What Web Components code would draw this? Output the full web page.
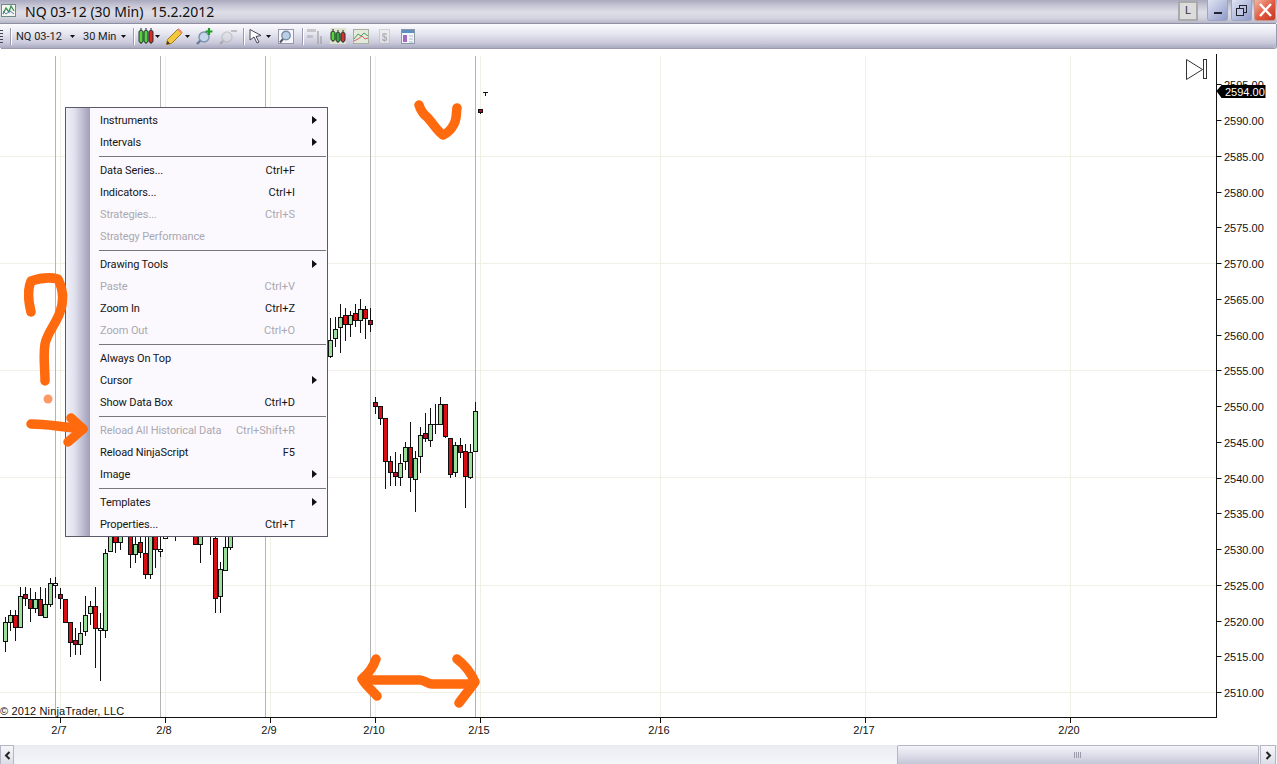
<!DOCTYPE html>
<html>
<head>
<meta charset="utf-8">
<title>NQ 03-12 (30 Min)</title>
<style>
    html, body { margin:0; padding:0; height:100%; overflow:hidden; background:#fff; }
</style>
</head>
<body>
<nt-window>
    <nt-titlebar slot="title" text="NQ 03-12 (30 Min)  15.2.2012"></nt-titlebar>
    <nt-toolbar slot="tools"></nt-toolbar>
    <nt-chart slot="chart">
        <nt-menu>
            <nt-item arrow>Instruments</nt-item>
            <nt-item arrow>Intervals</nt-item>
            <nt-sep></nt-sep>
            <nt-item keys="Ctrl+F">Data Series...</nt-item>
            <nt-item keys="Ctrl+I">Indicators...</nt-item>
            <nt-item keys="Ctrl+S" off>Strategies...</nt-item>
            <nt-item off>Strategy Performance</nt-item>
            <nt-sep></nt-sep>
            <nt-item arrow>Drawing Tools</nt-item>
            <nt-item keys="Ctrl+V" off>Paste</nt-item>
            <nt-item keys="Ctrl+Z">Zoom In</nt-item>
            <nt-item keys="Ctrl+O" off>Zoom Out</nt-item>
            <nt-sep></nt-sep>
            <nt-item>Always On Top</nt-item>
            <nt-item arrow>Cursor</nt-item>
            <nt-item keys="Ctrl+D">Show Data Box</nt-item>
            <nt-sep></nt-sep>
            <nt-item keys="Ctrl+Shift+R" off>Reload All Historical Data</nt-item>
            <nt-item keys="F5">Reload NinjaScript</nt-item>
            <nt-item arrow>Image</nt-item>
            <nt-sep></nt-sep>
            <nt-item arrow>Templates</nt-item>
            <nt-item keys="Ctrl+T">Properties...</nt-item>
        </nt-menu>
    </nt-chart>
    <nt-scrollbar slot="scroll"></nt-scrollbar>
</nt-window>
<script>
const TITLE_FONT = `"Noto Sans","Liberation Sans",sans-serif`;
const UI_FONT = `Roboto,"Liberation Sans",sans-serif`;
const AXIS_FONT = `"Liberation Sans",sans-serif`;

customElements.define("nt-window",class NtWindow extends HTMLElement {
    constructor(){
        super();
        this.attachShadow({mode:'open'}).innerHTML = `<style>
            :host { display:flex; flex-direction:column; width:1277px; height:764px; overflow:hidden; background:#fff; }
            ::slotted([slot=chart]) { flex:1 1 auto; min-height:0; }
        </style>
        <slot name="title"></slot>
        <slot name="tools"></slot>
        <slot name="chart"></slot>
        <slot name="scroll"></slot>`;
    }
});

customElements.define("nt-titlebar",class NtTitlebar extends HTMLElement {
    constructor(){
        super();
        this.attachShadow({mode:'open'}).innerHTML = `<style>
            :host { display:flex; align-items:flex-start; height:23px; box-sizing:border-box;
                background:linear-gradient(#a9a9be 0,#c3c3d3 5px,#dedee8 12px,#d4d4e0 18px,#b6b6c8 23px); }
            .logo { margin:3px 0 0 1px; width:15px; height:15px; flex:none; }
            .txt { margin-left:9px; font:14px/23px ${TITLE_FONT}; color:#111; white-space:pre; flex:1; }
            .lock { width:20px; height:20px; box-sizing:border-box; border:2px solid #aaa; background:#dcdcdc;
                font:11px/16px ${UI_FONT}; color:#333; text-align:center; margin:1px 9px 0 0; }
            .btn { width:21px; height:21px; box-sizing:border-box; margin-right:3px; border:1px solid #9ea5c4; border-top:0; border-radius:0 0 3px 3px;
                background:linear-gradient(135deg,#dfe3f2,#b4bcdc 55%,#8e9ac8); display:flex; align-items:center; justify-content:center; }
            .btn.close { width:22px; background:linear-gradient(135deg,#f3b6a2,#e0563c 55%,#c63a25); border-color:#c9968c; margin:0 1px 0 -1px; }
            svg { display:block; }
        </style>
        <svg class="logo" viewBox="0 0 15 15">
            <rect x=".5" y="1.5" width="14" height="12" fill="#f2f6ee" stroke="#6c8a88"/>
            <path d="M2 11L5 5l3 4 2-6 3 5" fill="none" stroke="#3d8f55" stroke-width="1.3"/>
            <path d="M2 8l3 3 4-3 4 3" fill="none" stroke="#5a7fc0" stroke-width="1"/>
        </svg>
        <div class="txt"></div>
        <div class="lock">L</div>
        <div class="btn"><svg width="10" height="10"><rect x="1" y="7" width="8" height="2" fill="#223"/></svg></div>
        <div class="btn"><svg width="13" height="13" fill="none" stroke="#223"><rect x="4.5" y="1.5" width="7" height="7"/><rect x="1.5" y="4.5" width="7" height="7" fill="#c0c8e4"/></svg></div>
        <div class="btn close"><svg width="15" height="14" stroke="#fff" stroke-width="2.4"><path d="M2 1l11 12M13 1L2 13"/></svg></div>`;
        this.shadowRoot.querySelector(".txt").textContent = this.getAttribute("text");
    }
});

customElements.define("nt-toolbar",class NtToolbar extends HTMLElement {
    constructor(){
        super();
        let candle = (x,y,h,c)=>`<path d="M${x} ${y-2}v${h+4}" stroke="#222"/><rect x="${x-2}" y="${y+.5}" width="4" height="${h}" rx="1.5" fill="${c}" stroke="#233"/>`;
        let caret = (ml)=>`<svg style="margin-left:${ml}px" width="5" height="3"><path d="M0 0h5L2.5 3z" fill="#111"/></svg>`;
        this.attachShadow({mode:'open'}).innerHTML = `<style>
            :host { display:block; height:27px; background:#fff; }
            .bar { height:25px; display:flex; align-items:center; box-sizing:border-box; border-top:1px solid #8f8fa3;
                background:linear-gradient(#fbfbfe,#e6e6f0 40%,#c8c8da 80%,#a9a9c0); border-radius:0 0 3px 0; margin-right:1px; box-shadow:1px 1px 0 #9a9aae; font:11px ${UI_FONT}; color:#222; }
            .grip { width:3px; height:13px; flex:none; background:repeating-linear-gradient(#445 0 1px,transparent 1px 3px); }
            .div { width:1px; height:17px; background:#9a9aae; box-shadow:1px 0 0 #fff; flex:none; }
            span { white-space:nowrap; flex:none; display:block; }
            svg { display:block; flex:none; }
        </style>
        <div class="bar">
            <div class="grip"></div>
            <div class="div" style="margin-left:7px"></div>
            <span style="margin-left:5px;width:47px">NQ 03-12</span>${caret(7)}
            <span style="margin-left:8px;width:31px">30 Min</span>${caret(7)}
            <div class="div" style="margin-left:7px"></div>
            <svg style="margin-left:4px" width="16" height="18" viewBox="0 0 16 18">${candle(3,3,12,"#58d040")}${candle(8,3,12,"#58d040")}${candle(13,3,12,"#dc2a20")}</svg>${caret(1)}
            <svg style="margin-left:6px" width="17" height="17" viewBox="0 0 17 17"><path d="M.5 16.500l1-5L12 1l4 4L5.500 15.500z" fill="#f4c83c" stroke="#a07a18"/><path d="M12 1l4 4" stroke="#e88a70" stroke-width="2"/><path d="M.5 16.500l1-3.500 2.500 2.500z" fill="#333"/></svg>${caret(2)}
            <svg style="margin-left:6px" width="18" height="17" viewBox="0 0 18 17"><path d="M1 16l5-5" stroke="#6a7a98" stroke-width="2.400"/><circle cx="8" cy="9" r="5" fill="#c6d6ea" stroke="#7f93b0" stroke-width="1.500"/><path d="M13 0v7M9.500 3.500h7" stroke="#1f9a2a" stroke-width="2.200"/></svg>
            <svg style="margin-left:5px;opacity:.45" width="18" height="17" viewBox="0 0 18 17"><path d="M1 16l5-5" stroke="#888" stroke-width="2.400"/><circle cx="8" cy="9" r="5" fill="#ddd" stroke="#aaa" stroke-width="1.500"/><path d="M12 3h6" stroke="#888" stroke-width="2"/></svg>
            <div class="div" style="margin-left:6px"></div>
            <svg style="margin-left:5px" width="14" height="16" viewBox="0 0 14 16"><path d="M1 1.500l11 6-5 1 3 5.500-2 1-3-6-4 3z" fill="#fff" stroke="#445"/></svg>${caret(3)}
            <svg style="margin-left:7px" width="16" height="15" viewBox="0 0 16 15"><rect x=".5" y=".5" width="15" height="14" fill="#f4f6fb" stroke="#99a"/><circle cx="8" cy="6.500" r="4.200" fill="#b9cfe6" stroke="#7a8ea8" stroke-width="1.400"/><path d="M5 10l-3 3.500" stroke="#556" stroke-width="2"/></svg>
            <div class="div" style="margin-left:8px"></div>
            <svg style="margin-left:3px;opacity:.55" width="17" height="16" viewBox="0 0 17 16"><path d="M1 1h9v3H1zM1 7h6v3H1z" fill="#aaa"/><path d="M12 3v13M15 8v8" stroke="#999" stroke-width="2"/></svg>
            <svg style="margin-left:7px" width="16" height="16" viewBox="0 0 16 16"><rect width="16" height="16" fill="#dfe4cf"/>${candle(3,3,9,"#58d040")}${candle(8,4,9,"#3aa83a")}${candle(13,4,9,"#d83030")}</svg>
            <svg style="margin-left:7px" width="16" height="15" viewBox="0 0 16 15"><rect x=".5" y=".5" width="15" height="14" fill="#e4eadb" stroke="#a5b0a0"/><path d="M1 10l4-5 3 2 3-3 4 3" fill="none" stroke="#4aa05a"/><path d="M1 12l4-2 4-3 3 3 3-1" fill="none" stroke="#d06060"/></svg>
            <svg style="margin-left:10px;opacity:.55" width="11" height="15" viewBox="0 0 11 15"><rect x=".5" y=".5" width="10" height="14" fill="#eee" stroke="#bbb"/><text x="5.500" y="11.500" text-anchor="middle" font-family="Liberation Sans" font-weight="700" font-size="10" fill="#888">$</text></svg>
            <svg style="margin-left:11px" width="14" height="15" viewBox="0 0 14 15"><rect x=".5" y=".5" width="13" height="14" fill="#f3f6fa" stroke="#8c98a8"/><rect x="1" y="1" width="12" height="3" fill="#5b90c0"/><rect x="2" y="6" width="4" height="7" fill="#a06ac0"/><path d="M8 7h4M8 10h4M8 13h4" stroke="#b0b8c8"/></svg>
        </div>`;
    }
});

customElements.define("nt-chart",class NtChart extends HTMLElement {
    constructor(){
        super();
        this.attachShadow({mode:'open'}).innerHTML = `<style>
            :host { display:block; position:relative; background:#fff; }
            svg { position:absolute; left:0; top:0; display:block; }
            text { font-family:${AXIS_FONT}; font-size:11px; fill:#111; }
            .notes { pointer-events:none; filter:blur(.4px); }
            ::slotted(nt-menu) { position:absolute; left:65px; top:57px; }
        </style>
        ${this.draw()}
        <slot></slot>
        ${this.notes()}`;
    }

    // chart coords are page coords minus the 50px of bars above
    draw(){
        const T = 50;
        let s = `<svg width="1277" height="695" viewBox="0 ${T} 1277 695">`;
        // grid
        [156,263,370,477,585,692].forEach(y=>{
            s += `<path d="M0 ${y+.5}H1216" stroke="#f1f0e4"/>`;
        });
        for(let p=2510;p<=2595;p+=5){
            let y = Math.round(121 + (2590-p)*7.15);
            s += `<path d="M1216.5 ${y-.5}h5" stroke="#111"/>`;
            s += `<text x="1224" y="${y+4}">${p}.00</text>`;
        }
        [[60,"2/7"],[165,"2/8"],[270,"2/9"],[375,"2/10"],[480,"2/15"],[660,"2/16"],[865,"2/17"],[1070,"2/20"]].forEach(([x,t])=>{
            s += `<path d="M${x+.5} ${T+6}V717" stroke="#f1f0e4"/>`;
            s += `<path d="M${x+.5} 717v6" stroke="#111"/>`;
            s += `<text x="${x-1}" y="734" text-anchor="middle">${t}</text>`;
        });
        [55,160,265,370,475].forEach(x=>{
            s += `<path d="M${x+.5} ${T+6}V717" stroke="#b4b4b4"/>`;
        });
        // candles: x, body top, body bottom, wick top, wick bottom, g/r
        const bars = [
            [5,622,641,617,652,"g"],[10,615,622,610,631,"g"],[15,615,627,610,641,"r"],[20,596,627,587,627,"g"],
            [25,594,598,587,606,"d"],[30,599,608,588,622,"r"],[35,599,608,592,613,"g"],[40,599,615,587,615,"r"],
            [45,604,617,588,617,"g"],[50,583,604,578,607,"g"],[55,583,585,577,598,"w"],[60,594,598,588,609,"d"],
            [65,599,622,599,623,"r"],[70,622,642,622,657,"r"],[75,640,644,628,655,"d"],[80,633,644,622,655,"g"],
            [85,615,631,596,636,"g"],[90,606,613,601,625,"g"],[95,606,628,587,668,"r"],[100,628,630,613,681,"w"],
            [105,553,630,549,638,"g"],[110,530,551,530,552,"g"],[115,530,542,530,553,"r"],[120,530,542,530,550,"g"],
            [130,530,554,530,568,"r"],[135,544,554,530,563,"g"],[140,542,552,530,558,"r"],[145,553,574,530,579,"r"],
            [150,530,574,530,579,"g"],[155,530,549,530,568,"r"],[160,549,551,530,557,"w"],[165,535,538,530,539,"w"],
            [175,530,534,530,541,"g"],[195,530,544,530,544,"r"],[200,530,544,530,563,"g"],[210,530,532,530,555,"w"],
            [215,538,598,530,613,"r"],[220,569,596,562,613,"g"],[225,547,570,530,571,"g"],[230,530,547,530,550,"g"],
            [330,340,356,318,358,"g"],[335,329,338,317,347,"g"],[340,317,327,304,353,"g"],[345,315,324,308,341,"r"],
            [350,315,324,311,337,"g"],[355,313,320,304,327,"r"],[360,309,320,299,333,"g"],[365,309,318,306,339,"r"],
            [370,320,324,308,332,"d"],[375,402,406,397,414,"d"],[380,406,418,406,425,"r"],[385,418,461,418,489,"r"],
            [390,461,472,456,486,"r"],[395,472,476,452,486,"d"],[400,463,477,454,486,"g"],[405,447,461,442,470,"g"],
            [410,447,477,422,492,"r"],[415,458,479,451,512,"g"],[420,435,456,427,473,"g"],[425,433,438,413,442,"d"],
            [430,424,440,408,447,"g"],[435,424,424,404,434,"w"],[440,404,424,397,424,"g"],[445,404,436,404,438,"r"],
            [450,438,474,438,478,"r"],[455,445,472,442,477,"g"],[460,445,452,438,458,"r"],[465,451,476,444,508,"r"],
            [470,452,477,444,479,"g"],[475,411,451,402,451,"g"],[480,109,112,109,114,"d"],[485,92,92,92,96,"w"]
        ];
        const fill = {g:"#9bdd9b",r:"#d80f14",d:"#a8122a",w:"#fff"};
        bars.forEach(([x,a,b,c,d,k])=>{
            s += `<path d="M${x+.5} ${c}V${d}" stroke="#111"/>`;
            if(a==b) s += `<path d="M${x-2} ${a+.5}h5" stroke="#111"/>`;
            else s += `<rect x="${x-2+.5}" y="${a+.5}" width="4" height="${b-a}" fill="${fill[k]}" stroke="#111"/>`;
        });
        // axes
        s += `<path d="M0 717.5H1217M1216.500 ${T+4}V718" stroke="#111"/>`;
        s += `<text x="0" y="715" letter-spacing=".12">© 2012 NinjaTrader, LLC</text>`;
        // go to last bar marker
        s += `<path d="M1186.500 59.500l16 10-16 10z" fill="#fff" stroke="#333"/><rect x="1203.500" y="59.500" width="3" height="19" fill="#fff" stroke="#333"/>`;
        // last price
        s += `<path d="M1216.500 91l5-6h44v13h-44z" fill="#000"/>`;
        s += `<text x="1225" y="96" style="fill:#fff">2594.00</text>`;
        return s + `</svg>`;
    }

    // marker pen notes, drawn over the menu too
    notes(){
        return `<svg class="notes" width="1277" height="695" viewBox="0 50 1277 695">
        <g fill="none" stroke="#ff6a0e" stroke-linecap="round" stroke-linejoin="round" stroke-width="9.500">
            <path d="M419 105c2 6 4 9 8 12 6 6 10 14 16 18 5-2 9-7 11-11 3-5 2-11 3-16"/>
            <path d="M31 312c-3-12-3-24 0-31 9-3 19-4 27-2 5 10 6 22 2 33-4 12-13 21-15 32-2 12 0 24 0 37"/>
            <path d="M31 424c9 0 18 1 26 2 9 1 17 2 26 3"/>
            <path d="M71 418l12 11-15 13"/>
            <path d="M363 680h57c4 0 8 4 12 4h41"/>
            <path d="M376 659c-3 9-8 15-14 20 4 7 10 11 15 17M457 659c8 6 14 14 18 23-5 7-11 14-16 21"/>
        </g>
        <circle cx="48" cy="399" r="4.500" fill="#fd9a66"/>
        </svg>`;
    }
});

customElements.define("nt-menu",class NtMenu extends HTMLElement {
    constructor(){
        super();
        this.attachShadow({mode:'open'}).innerHTML = `<style>
            :host { display:block; width:263px; box-sizing:border-box; padding:1px; border:1px solid #5a5a6a;
                background:linear-gradient(90deg,#f0f0f8 0,#e2e2ef 8px,#a09eb9 24px,#fbf9fe 24px); font:11px ${UI_FONT}; color:#111; }
        </style>
        <slot></slot>`;
    }
});

customElements.define("nt-sep",class NtSep extends HTMLElement {
    constructor(){
        super();
        this.attachShadow({mode:'open'}).innerHTML = `<style>
            :host { display:block; height:6px; box-sizing:border-box; padding:2.5px 0 0 32px; }
            div { height:1px; background:#77777f; }
        </style><div></div>`;
    }
});

customElements.define("nt-item",class NtItem extends HTMLElement {
    constructor(){
        super();
        let keys = this.getAttribute("keys") || "";
        let arrow = this.hasAttribute("arrow") ? `<svg width="5" height="8"><path d="M0 0l5 4-5 4z" fill="#111"/></svg>` : "";
        this.attachShadow({mode:'open'}).innerHTML = `<style>
            :host { display:flex; align-items:center; height:22px; padding-left:33px; white-space:nowrap; color:#151515; }
            :host([off]) { color:#aaa8b0; }
            .lbl { flex:1; display:block; letter-spacing:-.1px; }
            .keys { margin-right:31px; display:block; }
            .arr { position:absolute; left:246px; display:flex; }
        </style>
        <span class="lbl"><slot></slot></span>
        <span class="keys">${keys}</span>
        <span class="arr">${arrow}</span>`;
    }
});

customElements.define("nt-scrollbar",class NtScrollbar extends HTMLElement {
    constructor(){
        super();
        this.attachShadow({mode:'open'}).innerHTML = `<style>
            :host { display:flex; height:19px; background:linear-gradient(#e9ebf2,#f5f6f9); }
            .end { width:14px; height:19px; box-sizing:border-box; border:1px solid #b4b6c4; border-bottom:0; background:linear-gradient(#f6f6fa,#dcdde8); display:flex; align-items:center; justify-content:center; }
            .end.right { width:16px; margin:0 1px 0 1px; }
            .track { flex:1; }
            .thumb { width:362px; box-sizing:border-box; border:1px solid #b4b6c4; border-bottom:0; border-radius:2px 2px 0 0; background:linear-gradient(#f4f5f9,#d8dae6 60%,#c4c6d8); display:flex; align-items:center; justify-content:center; }
            .grip { width:8px; height:6px; background:repeating-linear-gradient(90deg,#9a9cac 0 1px,transparent 1px 2px); }
            svg { display:block; }
        </style>
        <div class="end"><svg width="7" height="9"><path d="M5.500 1L2 4.500 5.500 8" fill="none" stroke="#222" stroke-width="2"/></svg></div>
        <div class="track"></div>
        <div class="thumb"><div class="grip"></div></div>
        <div class="end right"><svg width="7" height="9"><path d="M1.500 1L5 4.500 1.500 8" fill="none" stroke="#222" stroke-width="2"/></svg></div>`;
    }
});
</script>
</body>
</html>
